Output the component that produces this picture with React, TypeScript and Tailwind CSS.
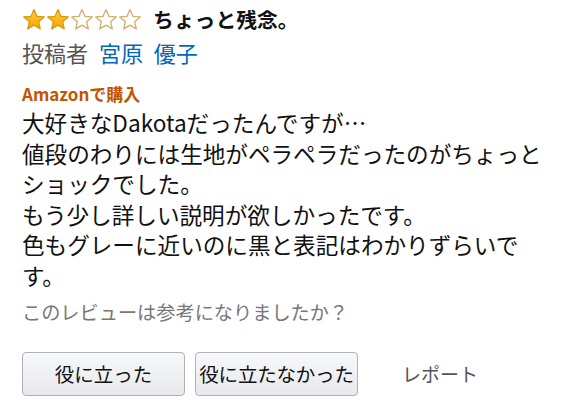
import React from 'react';

// 星アイコン（塗りつぶし / 空）
function Star({ filled }: { filled: boolean }) {
  return (
    <svg width="24" height="23" viewBox="0 0 24 23" className="shrink-0">
      <defs>
        <linearGradient id="starGold" x1="0" y1="0" x2="0" y2="1">
          <stop offset="0%" stopColor="#ffd43a" />
          <stop offset="100%" stopColor="#f0a200" />
        </linearGradient>
      </defs>
      <path
        d="M12 1.5 L14.9 8.3 L22.2 8.9 L16.6 13.7 L18.3 20.9 L12 17.1 L5.7 20.9 L7.4 13.7 L1.8 8.9 L9.1 8.3 Z"
        fill={filled ? 'url(#starGold)' : '#ffffff'}
        stroke={filled ? '#d89a10' : '#d3ad6a'}
        strokeWidth="1.3"
        strokeLinejoin="round"
      />
    </svg>
  );
}

function Rating({ value }: { value: number }) {
  return (
    <div className="flex items-center">
      {[0, 1, 2, 3, 4].map((i) => (
        <Star key={i} filled={i < value} />
      ))}
    </div>
  );
}

const lines = [
  '大好きなDakotaだったんですが…',
  '値段のわりには生地がペラペラだったのがちょっと',
  'ショックでした。',
  'もう少し詳しい説明が欲しかったです。',
  '色もグレーに近いのに黒と表記はわかりずらいで',
  'す。',
];

export default function App() {
  return (
    <div className="min-h-[404px] w-[570px] bg-white pl-[22px] pt-[6px] font-['Noto_Sans_CJK_JP','Noto_Sans',sans-serif] text-[#111]">
      {/* Title row */}
      <div className="flex h-[26px] items-center">
        <Rating value={2} />
        <h2 className="ml-[11px] text-[20.8px] font-bold leading-[26px] text-[#111]">ちょっと残念。</h2>
      </div>

      {/* Author */}
      <div className="mt-[5px] text-[22px] leading-[30px] text-[#555] [word-spacing:6px]">
        投稿者 <span className="text-[#0066c0]">宮原 優子</span>
      </div>

      {/* Verified purchase */}
      <div className="mt-[17px] text-[17px] font-bold leading-[20px] text-[#c45500]">Amazonで購入</div>

      {/* Body */}
      <div className="mt-[4px] text-[22.6px] leading-[30.5px]">
        {lines.map((l, i) => (
          <p key={i} className="whitespace-nowrap">
            {l}
          </p>
        ))}
      </div>

      <p className="mt-[9px] text-[19.2px] leading-[24px] text-[#777]">このレビューは参考になりましたか？</p>

      {/* Actions */}
      <div className="mt-[28px] flex items-center">
        <button className="flex h-[44px] w-[163px] items-center justify-center rounded-[4px] border border-[#adb1b8] bg-gradient-to-b from-[#f7f8fa] to-[#e7e9ec] text-[19.5px] text-[#111]">
          役に立った
        </button>
        <button className="ml-[10px] flex h-[44px] w-[163px] items-center justify-center whitespace-nowrap rounded-[4px] border border-[#adb1b8] bg-gradient-to-b from-[#f7f8fa] to-[#e7e9ec] text-[19.5px] tracking-[-0.2px] text-[#111]">
          役に立たなかった
        </button>
        <span className="ml-[44px] text-[19px] text-[#555]">レポート</span>
      </div>
    </div>
  );
}
